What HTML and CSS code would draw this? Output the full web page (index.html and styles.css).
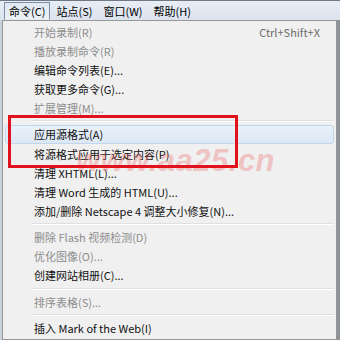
FILE: index.html
```html
<!DOCTYPE html>
<html lang="zh-CN">
<head>
<meta charset="utf-8">
<title>命令菜单</title>
<link rel="stylesheet" href="styles.css">
</head>
<body>
<div class="screen">
  <div class="bar">
    <span class="bar-item pressed">命令(C)</span>
    <span class="bar-item">站点(S)</span>
    <span class="bar-item">窗口(W)</span>
    <span class="bar-item">帮助(H)</span>
  </div>
  <div class="menu">
    <div class="item disabled"><span>开始录制(R)</span><span class="key">Ctrl+Shift+X</span></div>
    <div class="item disabled"><span>播放录制命令(R)</span></div>
    <div class="item"><span>编辑命令列表(E)...</span></div>
    <div class="item"><span>获取更多命令(G)...</span></div>
    <div class="item disabled"><span>扩展管理(M)...</span></div>
    <div class="sep"></div>
    <div class="item hover"><span>应用源格式(A)</span></div>
    <div class="item"><span>将源格式应用于选定内容(P)</span></div>
    <div class="item"><span>清理 XHTML(L)...</span></div>
    <div class="item"><span>清理 Word 生成的 HTML(U)...</span></div>
    <div class="item"><span>添加/删除 Netscape 4 调整大小修复(N)...</span></div>
    <div class="sep"></div>
    <div class="item disabled"><span>删除 Flash 视频检测(D)</span></div>
    <div class="item disabled"><span>优化图像(O)...</span></div>
    <div class="item"><span>创建网站相册(C)...</span></div>
    <div class="sep"></div>
    <div class="item disabled"><span>排序表格(S)...</span></div>
    <div class="sep"></div>
    <div class="item"><span>插入 Mark of the Web(I)</span></div>
  </div>
  <div class="watermark">www.aa25.cn</div>
  <div class="redbox"></div>
</div>
</body>
</html>
```

FILE: styles.css
```css
html, body {
  margin: 0;
  padding: 0;
}
body {
  width: 340px;
  height: 340px;
  overflow: hidden;
  background: #8d9299;
  font-family: "Noto Sans CJK SC", "Noto Sans", sans-serif;
  font-size: 11px;
  color: #111;
}
.screen {
  position: relative;
  width: 340px;
  height: 340px;
  background: linear-gradient(90deg, #c9d3de 0, #c9d3de 2px, #8d9299 2px);
}
.bar {
  height: 20px;
  display: flex;
  align-items: stretch;
  gap: 1px;
  padding: 1px 0 0 4px;
  box-sizing: border-box;
  background: linear-gradient(#e8edf4, #dbe3ee);
  border-top: 1px solid #6f7985;
}
.bar-item {
  display: flex;
  align-items: center;
  padding: 0 4px;
  line-height: 16px;
  border: 1px solid transparent;
  color: #000;
}
.bar-item.pressed {
  border-color: #7d8ea5;
  background: linear-gradient(#dfe7f1, #eef2f7);
  border-bottom-color: transparent;
}
.menu {
  margin-left: 2px;
  width: 335px;
  height: 320px;
  box-sizing: border-box;
  background: #f0f0f0;
  border: 1px solid #979797;
  padding: 1px 2px;
  display: flex;
  flex-direction: column;
}
.item {
  height: 19.3px;
  display: flex;
  align-items: center;
  justify-content: space-between;
  padding: 0 13px 0 28px;
  border: 1px solid transparent;
  box-sizing: border-box;
  border-radius: 3px;
  white-space: nowrap;
  color: #111;
}
.item.disabled {
  color: #8d8d8d;
}
.item.hover {
  background: linear-gradient(#e9f1fa, #dce8f5);
  border-color: #c3d7ec;
}
.key {
  color: #6d6d6d;
}
.sep {
  height: 7.5px;
  display: flex;
  align-items: center;
  margin-left: 26px;
}
.sep::before {
  content: "";
  flex: 1;
  height: 0;
  border-top: 1px solid #e0e0e0;
  border-bottom: 1px solid #ffffff;
}
.watermark {
  position: absolute;
  left: 76px;
  top: 143px;
  font-family: "Liberation Sans", Arial, sans-serif;
  font-size: 31px;
  font-weight: bold;
  font-style: italic;
  line-height: 36px;
  color: rgba(236, 80, 80, 0.3);
  letter-spacing: 0.5px;
  pointer-events: none;
}
.redbox {
  position: absolute;
  left: 8px;
  top: 115px;
  width: 230px;
  height: 53px;
  box-sizing: border-box;
  border: 3px solid #e2121c;
}
```
